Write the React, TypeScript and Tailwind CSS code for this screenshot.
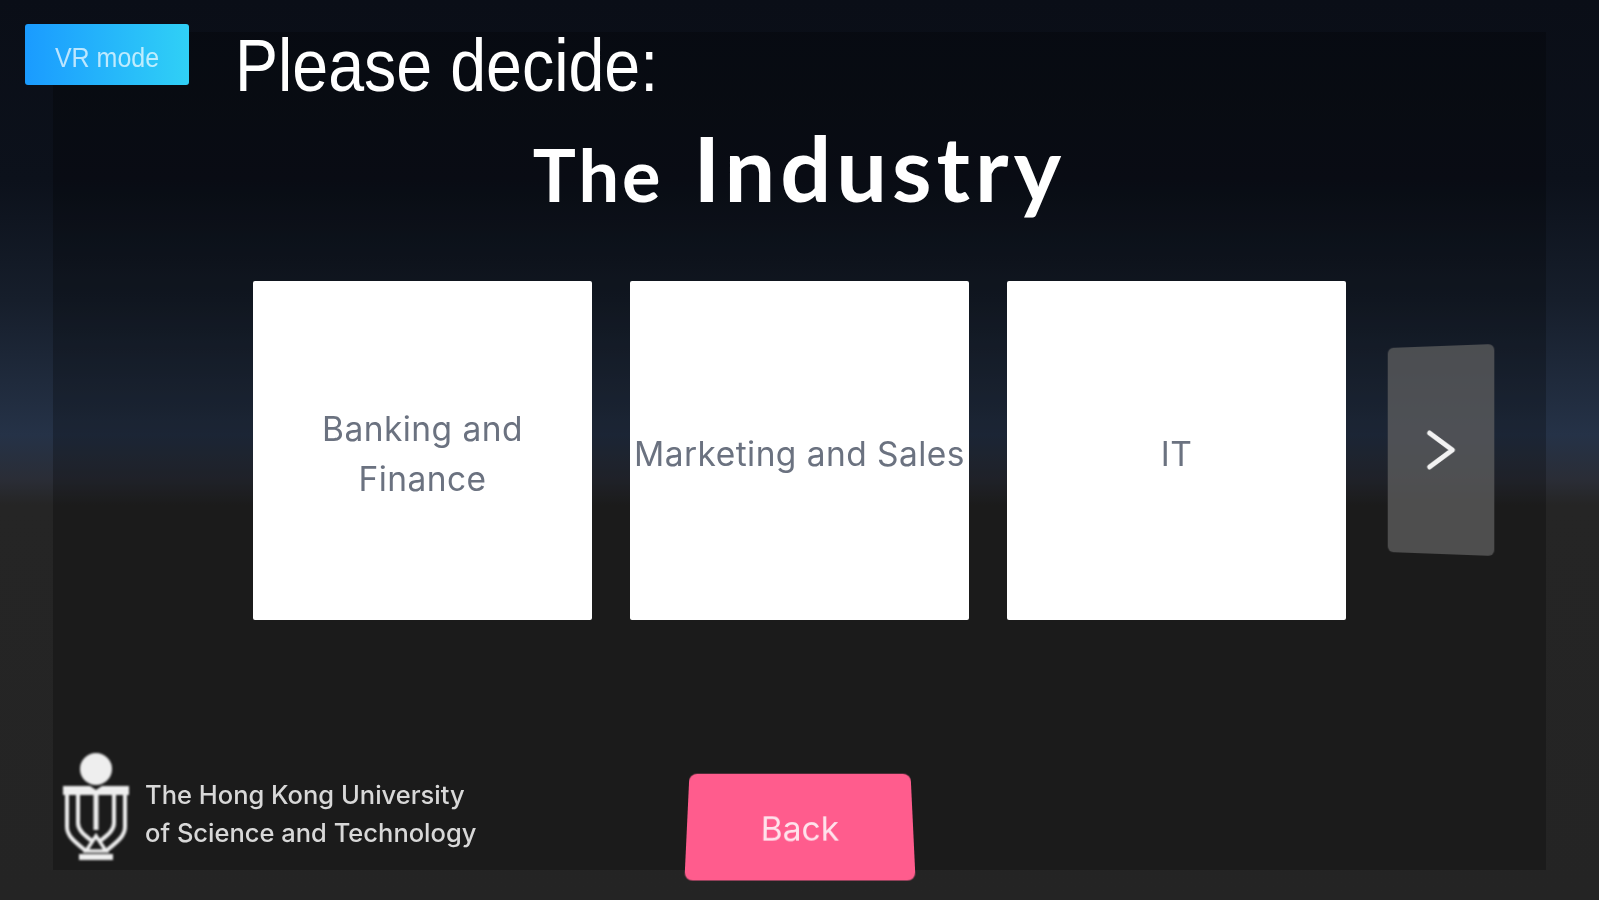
import React from "react";

const sans = "[font-family:'Liberation_Sans',Arial,sans-serif]";

function Card({ children }: { children: React.ReactNode }) {
  return (
    <div className="w-[338.5px] h-[339px] shrink-0 bg-white rounded-[2px] flex items-center justify-center pt-[7px] text-center text-[33.5px] leading-[50px] tracking-[0.45px] text-[#6b7280] whitespace-nowrap font-['Inter',sans-serif] overflow-hidden">
      <span className="blur-[0.6px]">{children}</span>
    </div>
  );
}

function Logo() {
  return (
    <svg viewBox="0 0 66 110" className="w-[66px] h-[110px] shrink-0 blur-[0.8px]" fill="none" stroke="#eeeeee">
      <circle cx="33" cy="17" r="16" fill="#eeeeee" stroke="none" />
      <path d="M0 34h27l6 4 6-4h27v9H0z" fill="#eeeeee" stroke="none" />
      <path d="M4 43v32c0 9 8 15 19 24" strokeWidth="4" />
      <path d="M62 43v32c0 9-8 15-19 24" strokeWidth="4" />
      <path d="M15 43v28c0 7 6 12 14 18" strokeWidth="4" />
      <path d="M51 43v28c0 7-6 12-14 18" strokeWidth="4" />
      <path d="M33 43v35" strokeWidth="5" />
      <path d="M33 84l-10 15h20z" strokeWidth="3.5" />
      <path d="M16 105h34" strokeWidth="6" />
    </svg>
  );
}

export default function App() {
  return (
    <div className="relative w-full h-[900px] overflow-hidden pt-[32px] pb-[30px] pl-[53px] pr-[53px] bg-[linear-gradient(180deg,#0a0e17_0px,#0c111b_180px,#161e2b_300px,#253247_435px,#2a2d36_480px,#252525_505px,#242424_900px)]">
      <button className={`absolute left-[25px] top-[24px] w-[164px] h-[61px] rounded-[3px] bg-[linear-gradient(90deg,#1a9bff,#30d0f6)] text-white/70 text-[25px] pt-[6px] ${sans}`}>
        <span className="inline-block blur-[0.6px] scale-y-110">VR mode</span>
      </button>

      <main className="h-full bg-black/25 flex flex-col">
        <h2 className={`ml-[182px] -mt-[8px] h-[72px] text-white text-[64.5px] leading-[72px] font-normal whitespace-nowrap origin-top scale-y-[1.15] blur-[0.5px] ${sans}`}>
          Please decide:
        </h2>

        <h1 className="mt-[21px] h-[100px] flex items-baseline justify-center gap-[30px] text-white font-['Lato',sans-serif] font-bold leading-[100px] blur-[0.5px]">
          <span className="text-[72px] tracking-[3px]">The</span>
          <span className="text-[90px] tracking-[5px]">Industry</span>
        </h1>

        <section className="relative mt-[64px] flex justify-center gap-[38.5px]">
          <Card>
            Banking and
            <br />
            Finance
          </Card>
          <Card>Marketing and Sales</Card>
          <Card>IT</Card>
          <button className="absolute left-[1331px] top-[65px] w-[112px] h-[208px] rounded-[6px] bg-[#626262]/70 flex items-center justify-center [transform:perspective(900px)_rotateY(-18deg)]">
            <svg viewBox="0 0 32 42" className="w-[32px] h-[42px] translate-x-[1px] blur-[0.5px]" fill="none" stroke="#f2f2f2" strokeWidth="5" strokeLinecap="round" strokeLinejoin="round">
              <path d="M4 4l24 17L4 38" />
            </svg>
          </button>
        </section>

        <footer className="mt-auto -mb-[11px] grid grid-cols-[1fr_226px_1fr] items-end">
          <div className="ml-[10px] mb-[19px] flex items-end gap-[16px]">
            <Logo />
            <p className="mb-[10px] text-[25.5px] leading-[38px] font-medium text-[#d8d8d8] whitespace-nowrap font-['Inter',sans-serif] blur-[0.7px]">
              The Hong Kong University
              <br />
              of Science and Technology
            </p>
          </div>
          <button className="h-[110px] rounded-[8px] pt-[6px] bg-[#ff5c8d] text-[#ffe3ec] text-[33.5px] font-['Inter',sans-serif] [transform:perspective(600px)_rotateX(14deg)]">
            <span className="inline-block blur-[0.5px]">Back</span>
          </button>
        </footer>
      </main>
    </div>
  );
}
